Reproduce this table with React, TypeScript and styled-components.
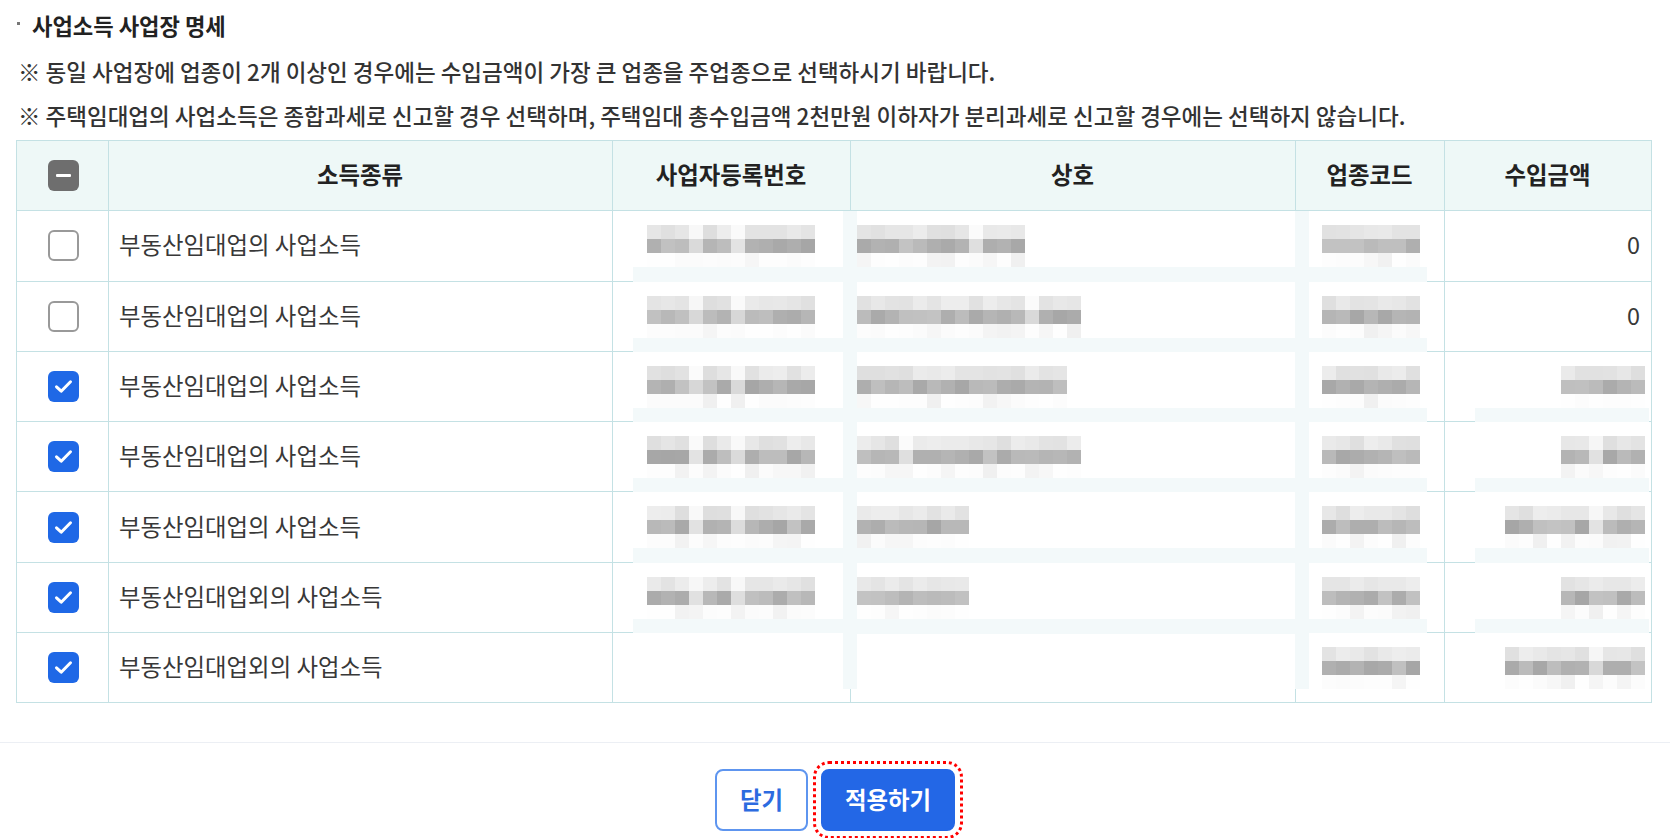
import React from 'react';
import styled, { createGlobalStyle } from 'styled-components';

const LINE = '#c4e1e4';
const HEAD_BG = '#eef8f7';
const BAND = '#f3f9fa';

const GlobalStyle = createGlobalStyle`
  html, body { margin: 0; padding: 0; background: #ffffff; }
  body { font-family: "Noto Sans CJK KR", "Noto Sans", sans-serif; color: #333; }
  * { box-sizing: border-box; }
`;

const Page = styled.div`
  width: 1670px;
  height: 838px;
  overflow: hidden;
  padding-top: 10px;
  display: flex;
  flex-direction: column;
`;

const Section = styled.section`
  padding-left: 16px;
`;

const TitleRow = styled.h2`
  margin: 0;
  height: 30px;
  display: flex;
  align-items: center;
  font-size: 22.2px;
  font-weight: 700;
  color: #222;
`;

const Bullet = styled.span`
  width: 3px;
  height: 3px;
  background: #777;
  margin: 0 12px 0 1px;
  align-self: flex-start;
  margin-top: 12px;
`;

const Notes = styled.ul`
  list-style: none;
  margin: 10px 0 2px 0;
  padding: 0 0 0 2px;
`;

const Note = styled.li`
  height: 44px;
  line-height: 43px;
  font-size: 22.5px;
  font-weight: 500;
  color: #333;
  white-space: nowrap;
`;

const COLS = '92px 504px 238px 445px 149px 206px';

const Table = styled.div`
  width: 1636px;
  border: 1px solid ${LINE};
  display: flex;
  flex-direction: column;
`;

const Row = styled.div<{ $head?: boolean }>`
  display: grid;
  grid-template-columns: ${COLS};
  height: 70.3px;
  border-bottom: 1px solid ${LINE};
  background: ${(p) => (p.$head ? HEAD_BG : '#ffffff')};
  &:last-child {
    border-bottom: none;
    height: 69.3px;
  }
`;

const Cell = styled.div<{ $align?: 'left' | 'center' | 'right' }>`
  position: relative;
  display: flex;
  align-items: center;
  justify-content: ${(p) =>
    p.$align === 'right' ? 'flex-end' : p.$align === 'left' ? 'flex-start' : 'center'};
  padding: 0 11px 3px 10px;
  border-right: 1px solid ${LINE};
  font-size: 23.4px;
  color: #383838;
  white-space: nowrap;
  &:last-child {
    border-right: none;
  }
`;

const HeadCell = styled(Cell)`
  font-weight: 700;
  color: #222;
`;

const CheckBox = styled.span<{ $state: 'checked' | 'unchecked' | 'mixed' }>`
  width: 31px;
  height: 31px;
  border-radius: 6px;
  margin: 3px 0 0 3px;
  display: inline-flex;
  align-items: center;
  justify-content: center;
  background: ${(p) =>
    p.$state === 'checked' ? '#1f68e6' : p.$state === 'mixed' ? '#6e6e6e' : '#ffffff'};
  border: ${(p) => (p.$state === 'unchecked' ? '2px solid #999999' : 'none')};
`;

const MinusBar = styled.span`
  width: 15px;
  height: 3px;
  border-radius: 1px;
  background: #ffffff;
`;

const Overlay = styled.svg<{ $left: number }>`
  position: absolute;
  top: 0;
  left: ${(p) => p.$left}px;
  z-index: 1;
  pointer-events: none;
  display: block;
`;

const Footer = styled.footer`
  margin-top: 39px;
  border-top: 1px solid #eceff4;
  padding-top: 26px;
  display: flex;
  justify-content: center;
  gap: 13px;
`;

const Button = styled.button<{ $primary?: boolean }>`
  height: 62px;
  padding: 0 ${(p) => (p.$primary ? 22 : 23)}px 3px;
  border-radius: 8px;
  border: 2px solid ${(p) => (p.$primary ? '#2367e6' : '#5e95ef')};
  background: ${(p) => (p.$primary ? '#2367e6' : '#ffffff')};
  color: ${(p) => (p.$primary ? '#ffffff' : '#2c6be0')};
  font-family: "Noto Sans CJK KR", sans-serif;
  font-size: 23.4px;
  font-weight: 700;
  cursor: pointer;
  outline: ${(p) => (p.$primary ? '3px dotted #ff0000' : 'none')};
  outline-offset: 5px;
`;

/* ---------- mosaic (redacted values) ---------- */

type Spec = {
  n: number;
  gaps: number[];
};

function rng(seed: number) {
  let s = seed * 9301 + 49297;
  return () => {
    s = (s * 9301 + 49297) % 233280;
    return s / 233280;
  };
}

const gray = (v: number) => `rgb(${v},${v},${v})`;

type OverlayDef = {
  left: number;
  width: number;
  blocksX: number | null;
  rightEnd?: number;
  bandLeft?: boolean;
  bandRight?: boolean;
};

const B = 14;

function Mosaic({
  def,
  spec,
  last,
  seed,
}: {
  def: OverlayDef;
  spec: Spec | null;
  last: boolean;
  seed: number;
}) {
  const h = last ? 56 : 71;
  const r = rng(seed);
  const rects: React.ReactNode[] = [];
  rects.push(<rect key="bg" x={0} y={0} width={def.width} height={h} fill="#ffffff" />);
  if (!last) rects.push(<rect key="bb" x={0} y={56} width={def.width} height={15} fill={BAND} />);
  if (def.bandLeft) rects.push(<rect key="bl" x={0} y={0} width={B} height={h} fill={BAND} />);
  if (def.bandRight)
    rects.push(<rect key="br" x={def.width - B} y={0} width={B} height={h} fill={BAND} />);
  if (spec) {
    const start =
      def.blocksX !== null ? def.blocksX : (def.rightEnd as number) - spec.n * B;
    for (let i = 0; i < spec.n; i++) {
      const gap = spec.gaps.includes(i);
      const top = gap ? 246 + Math.floor(r() * 6) : 222 + Math.floor(r() * 16);
      const bot = gap ? 214 + Math.floor(r() * 14) : 166 + Math.floor(r() * 30);
      const fr = r();
      const faint = fr < 0.3 ? 240 + Math.floor(r() * 8) : 251 + Math.floor(r() * 4);
      const x = start + i * B;
      rects.push(<rect key={`t${i}`} x={x} y={14} width={B} height={B} fill={gray(top)} />);
      rects.push(<rect key={`b${i}`} x={x} y={28} width={B} height={B} fill={gray(bot)} />);
      rects.push(<rect key={`f${i}`} x={x} y={42} width={B} height={B} fill={gray(faint)} />);
    }
  }
  return (
    <Overlay $left={def.left} width={def.width} height={h} aria-hidden="true">
      {rects}
    </Overlay>
  );
}

const DEF_REG: OverlayDef = { left: 20, width: 224, blocksX: 14, bandRight: true };
const DEF_NAME: OverlayDef = { left: 6, width: 438, blocksX: 0 };
const DEF_CODE: OverlayDef = { left: -1, width: 132, blocksX: 27, bandLeft: true };
const DEF_AMT: OverlayDef = { left: 30, width: 174, blocksX: null, rightEnd: 170 };

type RowData = {
  kind: string;
  checked: boolean;
  reg: Spec | null;
  name: Spec | null;
  code: Spec | null;
  amount: Spec | string;
};

const rows: RowData[] = [
  { kind: '부동산임대업의 사업소득', checked: false, reg: { n: 12, gaps: [3, 6] }, name: { n: 12, gaps: [8] }, code: { n: 7, gaps: [] }, amount: '0' },
  { kind: '부동산임대업의 사업소득', checked: false, reg: { n: 12, gaps: [3, 6] }, name: { n: 16, gaps: [12] }, code: { n: 7, gaps: [] }, amount: '0' },
  { kind: '부동산임대업의 사업소득', checked: true, reg: { n: 12, gaps: [3, 6] }, name: { n: 15, gaps: [] }, code: { n: 7, gaps: [] }, amount: { n: 6, gaps: [] } },
  { kind: '부동산임대업의 사업소득', checked: true, reg: { n: 12, gaps: [3, 6] }, name: { n: 16, gaps: [3] }, code: { n: 7, gaps: [] }, amount: { n: 6, gaps: [2] } },
  { kind: '부동산임대업의 사업소득', checked: true, reg: { n: 12, gaps: [3, 6] }, name: { n: 8, gaps: [] }, code: { n: 7, gaps: [] }, amount: { n: 10, gaps: [6] } },
  { kind: '부동산임대업외의 사업소득', checked: true, reg: { n: 12, gaps: [3, 6] }, name: { n: 8, gaps: [] }, code: { n: 7, gaps: [] }, amount: { n: 6, gaps: [] } },
  { kind: '부동산임대업외의 사업소득', checked: true, reg: null, name: null, code: { n: 7, gaps: [] }, amount: { n: 10, gaps: [6] } },
];

function Check({ state }: { state: 'checked' | 'unchecked' | 'mixed' }) {
  return (
    <CheckBox $state={state} role="checkbox" aria-checked={state === 'mixed' ? 'mixed' : state === 'checked'}>
      {state === 'mixed' && <MinusBar />}
      {state === 'checked' && (
        <svg width="19" height="15" viewBox="0 0 19 15" aria-hidden="true">
          <path d="M2.5 7.8 L7.2 12.2 L16.5 2.8" fill="none" stroke="#ffffff" strokeWidth="3" strokeLinecap="round" strokeLinejoin="round" />
        </svg>
      )}
    </CheckBox>
  );
}

export default function App() {
  return (
    <>
      <GlobalStyle />
      <Page>
        <Section>
          <TitleRow>
            <Bullet />
            사업소득 사업장 명세
          </TitleRow>
          <Notes>
            <Note>※ 동일 사업장에 업종이 2개 이상인 경우에는 수입금액이 가장 큰 업종을 주업종으로 선택하시기 바랍니다.</Note>
            <Note>※ 주택임대업의 사업소득은 종합과세로 신고할 경우 선택하며, 주택임대 총수입금액 2천만원 이하자가 분리과세로 신고할 경우에는 선택하지 않습니다.</Note>
          </Notes>
          <Table role="table">
            <Row $head role="row">
              <HeadCell role="columnheader">
                <Check state="mixed" />
              </HeadCell>
              <HeadCell role="columnheader">소득종류</HeadCell>
              <HeadCell role="columnheader">사업자등록번호</HeadCell>
              <HeadCell role="columnheader">상호</HeadCell>
              <HeadCell role="columnheader">업종코드</HeadCell>
              <HeadCell role="columnheader">수입금액</HeadCell>
            </Row>
            {rows.map((row, i) => {
              const last = i === rows.length - 1;
              return (
                <Row key={i} role="row">
                  <Cell role="cell">
                    <Check state={row.checked ? 'checked' : 'unchecked'} />
                  </Cell>
                  <Cell role="cell" $align="left">{row.kind}</Cell>
                  <Cell role="cell">
                    <Mosaic def={DEF_REG} spec={row.reg} last={last} seed={i * 7 + 1} />
                  </Cell>
                  <Cell role="cell">
                    {(row.name || !last) && (
                      <Mosaic def={DEF_NAME} spec={row.name} last={last} seed={i * 7 + 2} />
                    )}
                  </Cell>
                  <Cell role="cell">
                    <Mosaic def={DEF_CODE} spec={row.code} last={last} seed={i * 7 + 3} />
                  </Cell>
                  <Cell role="cell" $align="right">
                    {typeof row.amount === 'string' ? (
                      row.amount
                    ) : (
                      <Mosaic def={DEF_AMT} spec={row.amount} last={last} seed={i * 7 + 4} />
                    )}
                  </Cell>
                </Row>
              );
            })}
          </Table>
        </Section>
        <Footer>
          <Button type="button">닫기</Button>
          <Button type="button" $primary>
            적용하기
          </Button>
        </Footer>
      </Page>
    </>
  );
}
